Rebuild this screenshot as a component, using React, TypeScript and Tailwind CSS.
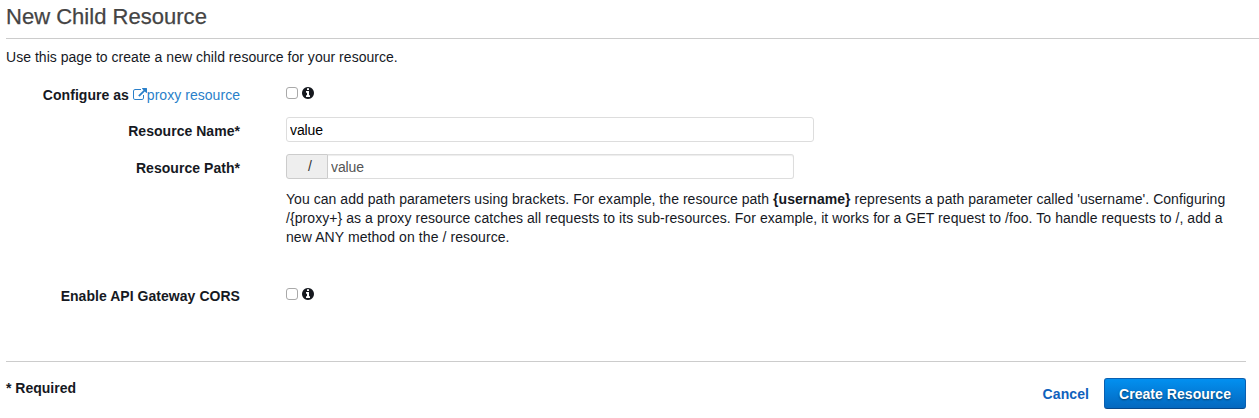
import type { ReactNode } from "react";

function InfoIcon() {
  return (
    <svg viewBox="128 128 1536 1536" className="size-3 fill-[#16191f]" aria-hidden="true">
      <path d="M1152 1376v-160q0-14-9-23t-23-9h-96v-512q0-14-9-23t-23-9h-320q-14 0-23 9t-9 23v160q0 14 9 23t23 9h96v320h-96q-14 0-23 9t-9 23v160q0 14 9 23t23 9h448q14 0 23-9t9-23zm-128-896v-160q0-14-9-23t-23-9h-192q-14 0-23 9t-9 23v160q0 14 9 23t23 9h192q14 0 23-9t9-23zm640 416q0 209-103 385.5t-279.5 279.5-385.5 103-385.5-103-279.5-279.5-103-385.5 103-385.5 279.5-279.5 385.5-103 385.5 103 279.5 279.5 103 385.5z" />
    </svg>
  );
}

function ExternalLinkIcon() {
  return (
    <svg viewBox="0 0 1792 1792" className="-mt-[3px] inline size-[14px] fill-current align-middle" aria-hidden="true">
      <path d="M1408 928v320q0 119-84.5 203.5t-203.5 84.5h-832q-119 0-203.5-84.5t-84.5-203.5v-832q0-119 84.5-203.5t203.5-84.5h704q14 0 23 9t9 23v64q0 14-9 23t-23 9h-704q-66 0-113 47t-47 113v832q0 66 47 113t113 47h832q66 0 113-47t47-113v-320q0-14 9-23t23-9h64q14 0 23 9t9 23zm384-864v512q0 26-19 45t-45 19-45-19l-176-176-652 652q-10 10-23 10t-23-10l-114-114q-10-10-10-23t10-23l652-652-176-176q-19-19-19-45t19-45 45-19h512q26 0 45 19t19 45z" />
    </svg>
  );
}

function Label({ children }: { children: ReactNode }) {
  return <div className="w-[234px] shrink-0 text-right font-bold tracking-[0.04px] whitespace-nowrap">{children}</div>;
}

function Check({ label }: { label: string }) {
  return (
    <div className="ml-[46px] flex h-3 items-center gap-1">
      <input type="checkbox" aria-label={label} className="size-3 appearance-none rounded-[3px] border border-[#a9a9a9] bg-white" />
      <InfoIcon />
    </div>
  );
}

export default function App() {
  return (
    <main className="h-[418px] w-[1259px] overflow-hidden bg-white pl-[6px] font-['Liberation_Sans',Arial,sans-serif] text-[14px] leading-[19px] text-[#16191f]">
      <h1 className="h-[39px] border-b border-[#ccc] pt-[3px] text-[22px] leading-[27px] text-[#444]">
        <span className="tracking-[0.02px] [-webkit-text-stroke:0.25px_#444]">New Child Resource</span>
      </h1>
      <p className="mt-[9px] h-[19px] tracking-[0.03px]">Use this page to create a new child resource for your resource.</p>

      <div className="mt-[19px] flex h-[19px]">
        <Label>
          Configure as{" "}
          <a className="font-normal text-[#2a7fc9]">
            <ExternalLinkIcon />
            proxy resource
          </a>
        </Label>
        <div className="pt-px"><Check label="Configure as proxy resource" /></div>
      </div>

      <div className="mt-3 flex h-[25px]">
        <div className="pt-[5px]"><Label>Resource Name*</Label></div>
        <input defaultValue="value" aria-label="Resource Name" className="ml-[46px] h-[25px] w-[528px] rounded-[3px] border border-[#ddd] bg-white px-[3px] tracking-[-0.1px] text-black" />
      </div>

      <div className="mt-3 flex h-[25px]">
        <div className="pt-[5px]"><Label>Resource Path*</Label></div>
        <div className="ml-[46px] flex">
          <span className="h-[25px] w-[42px] rounded-l-[3px] border border-[#ccc] bg-[#eee] pt-[2px] pl-[21px] text-[#333]">/</span>
          <input defaultValue="value" aria-label="Resource Path" className="h-[25px] w-[466px] rounded-r-[3px] border border-l-0 border-[#ddd] bg-white px-[3px] tracking-[-0.1px] text-[#555] shadow-[inset_0_1px_1px_rgba(0,0,0,0.075)]" />
        </div>
      </div>

      <div className="mt-[11px] ml-[280px] h-[57px] whitespace-nowrap">
        <p className="tracking-[0.047px]">You can add path parameters using brackets. For example, the resource path <b>{"{username}"}</b> represents a path parameter called 'username'. Configuring</p>
        <p className="tracking-[0.066px]">{"/{proxy+} as a proxy resource catches all requests to its sub-resources. For example, it works for a GET request to /foo. To handle requests to /, add a"}</p>
        <p className="tracking-[0.085px]">new ANY method on the / resource.</p>
      </div>

      <div className="mt-10 flex h-[19px]">
        <Label>Enable API Gateway CORS</Label>
        <div className="pt-px"><Check label="Enable API Gateway CORS" /></div>
      </div>

      <footer className="mt-[55px] mr-[13px] flex justify-between border-t border-[#ccc]">
        <div className="pt-[17px] font-bold">* Required</div>
        <div className="flex items-center gap-[15px] pt-4 font-bold">
          <button className="pt-[2px] tracking-[0.08px] text-[#0f62bd]">Cancel</button>
          <button className="h-[31px] w-[142px] rounded-[3px] border border-[#0a5fb0] border-b-[#07488a] bg-linear-to-b from-[#0290f0] to-[#0468bf] pt-[2px] tracking-[0.05px] text-white text-shadow-[0_1px_2px_rgba(0,0,0,0.5)]">Create Resource</button>
        </div>
      </footer>
    </main>
  );
}
